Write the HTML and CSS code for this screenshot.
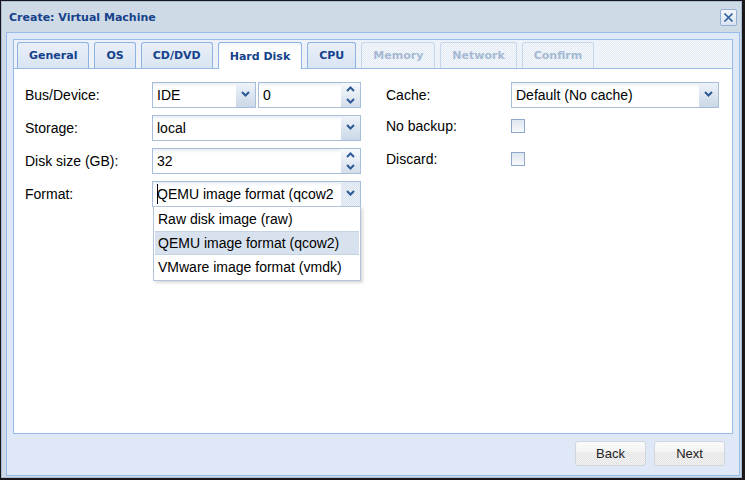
FILE: index.html
```html
<!DOCTYPE html>
<html>
<head>
<meta charset="utf-8">
<title>Create: Virtual Machine</title>
<link rel="stylesheet" href="styles.css">
</head>
<body>
<div class="win">
  <div class="win-head">
    <span class="title">Create: Virtual Machine</span>
    <div class="close"><svg width="11" height="11" viewBox="0 0 11 11"><path d="M1.5 1.5 L9.5 9.5 M9.5 1.5 L1.5 9.5" stroke="#2f5f9f" stroke-width="1.7" fill="none"/></svg></div>
  </div>
  <div class="win-body">
    <div class="tabpanel">
      <div class="tabstrip">
        <div class="tab">General</div>
        <div class="tab">OS</div>
        <div class="tab">CD/DVD</div>
        <div class="tab active">Hard Disk</div>
        <div class="tab">CPU</div>
        <div class="tab disabled">Memory</div>
        <div class="tab disabled">Network</div>
        <div class="tab disabled">Confirm</div>
      </div>
      <div class="tabbody">
        <div class="form">
          <div class="col">
            <div class="row">
              <span class="lbl">Bus/Device:</span>
              <div class="pair">
                <div class="field combo-sm">
                  <div class="inp"><span class="val">IDE</span></div>
                  <div class="trig"><svg width="9" height="6" viewBox="0 0 9 6"><path d="M1 1 L4.5 4.5 L8 1" stroke="#2d5a96" stroke-width="2" fill="none"/></svg></div>
                </div>
                <div class="field spin-sm">
                  <div class="inp"><span class="val">0</span></div>
                  <div class="spin">
                    <div class="sp up"><svg width="9" height="6" viewBox="0 0 9 6"><path d="M1 5 L4.5 1.5 L8 5" stroke="#2d5a96" stroke-width="2" fill="none"/></svg></div>
                    <div class="sp dn"><svg width="9" height="6" viewBox="0 0 9 6"><path d="M1 1 L4.5 4.5 L8 1" stroke="#2d5a96" stroke-width="2" fill="none"/></svg></div>
                  </div>
                </div>
              </div>
            </div>
            <div class="row">
              <span class="lbl">Storage:</span>
              <div class="field">
                <div class="inp"><span class="val">local</span></div>
                <div class="trig"><svg width="9" height="6" viewBox="0 0 9 6"><path d="M1 1 L4.5 4.5 L8 1" stroke="#2d5a96" stroke-width="2" fill="none"/></svg></div>
              </div>
            </div>
            <div class="row">
              <span class="lbl">Disk size (GB):</span>
              <div class="field">
                <div class="inp"><span class="val">32</span></div>
                <div class="spin">
                  <div class="sp up"><svg width="9" height="6" viewBox="0 0 9 6"><path d="M1 5 L4.5 1.5 L8 5" stroke="#2d5a96" stroke-width="2" fill="none"/></svg></div>
                  <div class="sp dn"><svg width="9" height="6" viewBox="0 0 9 6"><path d="M1 1 L4.5 4.5 L8 1" stroke="#2d5a96" stroke-width="2" fill="none"/></svg></div>
                </div>
              </div>
            </div>
            <div class="row">
              <span class="lbl">Format:</span>
              <div class="field focus">
                <div class="inp"><span class="caret"></span><span class="val">QEMU image format (qcow2</span></div>
                <div class="trig"><svg width="9" height="6" viewBox="0 0 9 6"><path d="M1 1 L4.5 4.5 L8 1" stroke="#2d5a96" stroke-width="2" fill="none"/></svg></div>
              </div>
            </div>
          </div>
          <div class="col right">
            <div class="row">
              <span class="lbl">Cache:</span>
              <div class="field">
                <div class="inp"><span class="val">Default (No cache)</span></div>
                <div class="trig"><svg width="9" height="6" viewBox="0 0 9 6"><path d="M1 1 L4.5 4.5 L8 1" stroke="#2d5a96" stroke-width="2" fill="none"/></svg></div>
              </div>
            </div>
            <div class="row chk-row">
              <span class="lbl">No backup:</span>
              <span class="chk"></span>
            </div>
            <div class="row chk-row">
              <span class="lbl">Discard:</span>
              <span class="chk"></span>
            </div>
          </div>
        </div>
        <div class="droplist">
          <div class="item">Raw disk image (raw)</div>
          <div class="item sel">QEMU image format (qcow2)</div>
          <div class="item">VMware image format (vmdk)</div>
        </div>
      </div>
    </div>
    <div class="toolbar">
      <div class="btn">Back</div>
      <div class="btn">Next</div>
    </div>
  </div>
</div>
</body>
</html>
```
FILE: styles.css
```css
* { box-sizing: border-box; }
html, body { margin: 0; }
body {
  background: #1b1718;
  padding: 1px 3px 2px 1px;
  width: 745px;
  height: 480px;
  font-family: "Liberation Sans", Arial, sans-serif;
  font-size: 14px;
  color: #000;
}
.win {
  width: 741px;
  height: 477px;
  border: 1px solid #a7bcd7;
  background: #cfdae7;
  display: flex;
  flex-direction: column;
}
.win-head {
  flex: none;
  height: 30px;
  display: flex;
  align-items: center;
  justify-content: space-between;
  padding: 0 4px 0 7px;
}
.title {
  font: bold 11px "DejaVu Sans", Verdana, sans-serif;
  color: #15428b;
}
.close {
  width: 17px;
  height: 17px;
  margin-top: 1px;
  border: 1px solid #94afd3;
  border-radius: 2px;
  background: linear-gradient(#f4f7fb, #d9e3ef);
  display: flex;
  align-items: center;
  justify-content: center;
}
.win-body {
  flex: 1;
  margin: 0 1px 1px 4px;
  border: 1px solid #99bbe8;
  background: #dfe8f6;
  padding: 6px 6px 0;
  display: flex;
  flex-direction: column;
}
.tabpanel {
  height: 395px;
  display: flex;
  flex-direction: column;
}
.tabstrip {
  flex: none;
  height: 30px;
  border: 1px solid #99bbe8;
  padding: 2px 0 0 3px;
  display: flex;
  align-items: flex-start;
  gap: 5px;
  background: repeating-conic-gradient(#e6edf6 0 25%, #f3f6fb 0 50%) 0 0 / 2px 2px;
}
.tab {
  height: 26px;
  padding: 0 11px;
  border: 1px solid #8db2e3;
  border-bottom: 0;
  border-radius: 3px 3px 0 0;
  background: linear-gradient(#e9eff8, #d9e5f3);
  font: bold 11px "DejaVu Sans", Verdana, sans-serif;
  color: #15428b;
  display: flex;
  align-items: center;
}
.tab.active {
  height: 27px;
  margin-bottom: -1px;
  background: linear-gradient(#f4f7fb, #ffffff 40%);
  position: relative;
  z-index: 1;
}
.tab.disabled {
  border-color: #c6d6ec;
  color: #a6b9d4;
  background: repeating-conic-gradient(#e4ebf5 0 25%, #f4f7fb 0 50%) 0 0 / 2px 2px;
}
.tabbody {
  flex: 1;
  background: #fff;
  border: 1px solid #99bbe8;
  border-top: 0;
  position: relative;
  padding: 13px 0 0 11px;
}
.form {
  display: flex;
  gap: 25px;
}
.col {
  display: flex;
  flex-direction: column;
  gap: 7px;
}
.row {
  display: flex;
  align-items: center;
  height: 26px;
}
.lbl {
  width: 127px;
  flex: none;
}
.right .lbl { width: 125px; }
.field {
  width: 209px;
  height: 26px;
  display: flex;
  border: 1px solid #a8bdd8;
  background: #fff;
}
.right .field { width: 208px; }
.pair {
  display: flex;
  gap: 2px;
}
.field.combo-sm { width: 104px; }
.field.spin-sm { width: 103px; }
.inp {
  flex: 1;
  min-width: 0;
  display: flex;
  align-items: center;
  padding: 0 2px 0 4px;
  background: linear-gradient(#e8edf4, #fff 4px);
}
.val {
  white-space: nowrap;
}
.caret {
  flex: none;
  width: 1px;
  height: 20px;
  background: #000;
  margin-right: -1px;
  position: relative;
  z-index: 1;
}
.trig {
  flex: none;
  width: 19px;
  background: linear-gradient(#eef3f9, #cbd8e8);
  display: flex;
  align-items: center;
  justify-content: center;
  padding-bottom: 3px;
}
.focus .trig {
  background: repeating-conic-gradient(#d5e0ed 0 25%, #eef3f9 0 50%) 0 0 / 2px 2px;
}
.spin {
  flex: none;
  width: 19px;
  display: flex;
  flex-direction: column;
}
.sp {
  flex: 1;
  display: flex;
  align-items: center;
  justify-content: center;
}
.sp.up { background: linear-gradient(#f6f9fc, #e6edf5); }
.sp.dn { background: linear-gradient(#e4ebf4, #d3deeb); }
.chk-row { height: 22px; }
.col.right .chk-row:last-child { margin-top: 4px; }
.chk {
  width: 14px;
  height: 14px;
  border: 1px solid #8fa9cc;
  background: linear-gradient(#dfe6ef, #f7f9fc);
}
.droplist {
  position: absolute;
  left: 139px;
  top: 137px;
  width: 208px;
  border: 1px solid #b3c5dc;
  background: #fff;
  padding: 0 1px 1px;
  box-shadow: 2px 2px 3px rgba(0, 0, 0, 0.14);
}
.item {
  height: 24px;
  line-height: 24px;
  padding-left: 3px;
  white-space: nowrap;
}
.item.sel {
  background: #d8e2ee;
  border-top: 1px solid #c6d3e4;
  border-bottom: 1px solid #c6d3e4;
  line-height: 22px;
}
.toolbar {
  flex: 1;
  display: flex;
  justify-content: flex-end;
  align-items: flex-start;
  gap: 8px;
  padding: 7px 8px 0 0;
}
.btn {
  width: 71px;
  height: 25px;
  border: 1px solid #d2d6dc;
  border-radius: 3px;
  background: linear-gradient(#fbfbfb 0, #f3f3f3 45%, transparent 45%), repeating-conic-gradient(#e3e3e3 0 25%, #f4f4f4 0 50%) 0 0 / 2px 2px;
  font-size: 13px;
  color: #222;
  display: flex;
  align-items: center;
  justify-content: center;
}
```
